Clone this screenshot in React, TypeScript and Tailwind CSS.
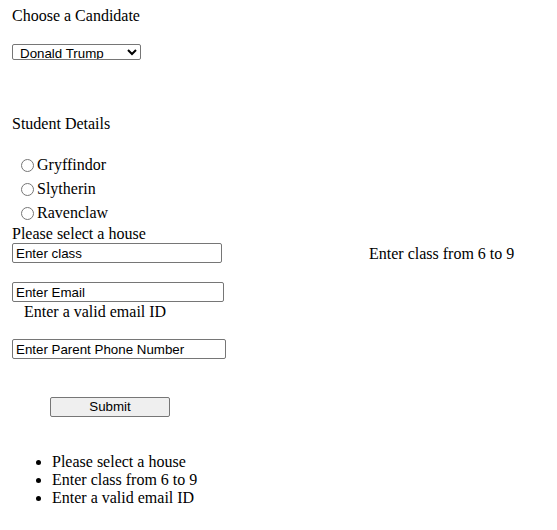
import React from 'react';

const houses = ['Gryffindor', 'Slytherin', 'Ravenclaw'];
const errors = ['Please select a house', 'Enter class from 6 to 9', 'Enter a valid email ID'];

const inputCls =
  "h-[20px] border border-[#767676] rounded-[2px] px-[3px] text-[13.33px] font-['Liberation_Sans',Arial,sans-serif] text-black bg-white";

const App: React.FC = () => {
  return (
    <div className="min-h-[530px] bg-white pl-[12px] pt-[7px] font-['Liberation_Serif','Times_New_Roman',serif] text-[16px] leading-[18px] text-black">
      <p>Choose a Candidate</p>
      <select
        defaultValue="trump"
        className="mt-[19px] block h-[16px] w-[129px] border border-[#767676] rounded-[2px] pl-[3px] text-[13.33px] leading-[14px] font-['Liberation_Sans',Arial,sans-serif] text-black bg-white"
      >
        <option value="trump">Donald Trump</option>
        <option value="biden">Joe Biden</option>
      </select>

      <p className="mt-[55px]">Student Details</p>

      {/* houses */}
      <div className="mt-[20px]">
        {houses.map((h) => (
          <label key={h} className="flex h-[24px] items-center">
            <input type="radio" name="house" className="ml-[9px] mr-[3px] h-[13px] w-[13px]" />
            <span>{h}</span>
          </label>
        ))}
      </div>
      <p>Please select a house</p>

      <div className="flex items-start">
        <input type="text" defaultValue="Enter class" className={`${inputCls} w-[210px]`} />
        <span className="ml-[147px] mt-[2px] leading-[18px]">Enter class from 6 to 9</span>
      </div>

      <input type="text" defaultValue="Enter Email" className={`${inputCls} mt-[19px] block w-[212px]`} />
      <p className="mt-[1px] pl-[12px]">Enter a valid email ID</p>

      <input
        type="text"
        defaultValue="Enter Parent Phone Number"
        className={`${inputCls} mt-[18px] block w-[214px]`}
      />

      <button className="ml-[38px] mt-[38px] block h-[20px] w-[120px] border border-[#767676] rounded-[2px] bg-[#efefef] text-[13.33px] font-['Liberation_Sans',Arial,sans-serif] text-black">
        Submit
      </button>

      <ul className="mt-[36px] list-disc pl-[40px]">
        {errors.map((e) => (
          <li key={e}>{e}</li>
        ))}
      </ul>
    </div>
  );
};

export default App;
